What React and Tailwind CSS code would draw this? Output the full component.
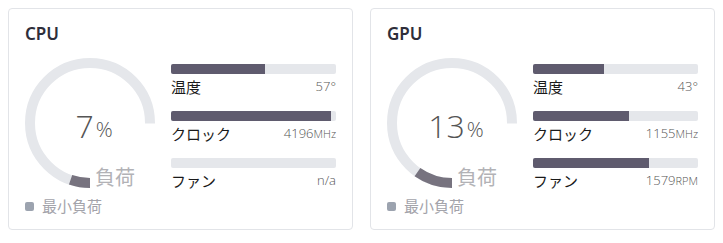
import React from 'react';

const FONT = { fontFamily: '"Noto Sans", "Noto Sans CJK JP", sans-serif' };
const LIGHT = { fontFamily: '"Open Sans", "Noto Sans", sans-serif' };

const R = 60;
const C = 2 * Math.PI * R;

function Gauge({ value }) {
  const track = C * 0.75;
  const fill = (track * value) / 100;
  return (
    <div className="relative h-[130px] w-[130px]">
      <svg width="130" height="130" viewBox="0 0 130 130" className="rotate-90">
        <circle cx="65" cy="65" r={R} fill="none" stroke="#e5e7eb" strokeWidth="10" strokeDasharray={`${track} ${C}`} />
        <circle cx="65" cy="65" r={R} fill="none" stroke="#77737f" strokeWidth="10" strokeDasharray={`${fill} ${C}`} />
      </svg>
      <div className="absolute inset-0 flex items-center justify-center pl-[8px] pt-[6px] text-[#555]" style={LIGHT}>
        <span className="text-[32px] leading-none font-light">{value}</span>
        <span className="ml-[2px] mt-[6px] text-[21px] leading-none font-light">%</span>
      </div>
      <span className="absolute left-[70px] top-[108px] text-[20px] leading-[24px] text-[#b2b2b6]">負荷</span>
    </div>
  );
}

function Stat({ label, pct, value, unit }) {
  return (
    <div>
      <div className="h-[10px] w-full overflow-hidden rounded-[2px] bg-[#e5e7eb]">
        <div className="h-full bg-[#5f5b6e]" style={{ width: `${pct}%` }} />
      </div>
      <div className="mt-[3px] flex h-[20px] items-center justify-between">
        <span className="text-[15px] text-[#1a1a1a]">{label}</span>
        <span className="text-[13px] font-light text-[#555]" style={LIGHT}>
          {value}
          {unit && <span className="text-[11px]">{unit}</span>}
        </span>
      </div>
    </div>
  );
}

function Card({ title, load, stats }) {
  return (
    <div className="h-[222px] w-[345px] rounded-[4px] border border-[#e2e4e8] bg-white px-4 pt-[13px]">
      <h2 className="text-[17px] leading-[24px] font-semibold text-[#2e2e3a]">{title}</h2>
      <div className="mt-[12px] flex">
        <div className="w-[146px]">
          <Gauge value={load} />
          <div className="mt-[9px] flex items-center gap-[8px]">
            <span className="h-[9px] w-[9px] shrink-0 rounded-[2px] bg-[#9ca3af]" />
            <span className="text-[15px] leading-[18px] text-[#a3a3aa]">最小負荷</span>
          </div>
        </div>
        <div className="mt-[6px] flex flex-1 flex-col gap-[14px]">
          {stats.map((s) => (
            <Stat key={s.label} {...s} />
          ))}
        </div>
      </div>
    </div>
  );
}

export default function App() {
  return (
    <div className="flex h-[243px] w-[723px] gap-[17px] bg-white pl-[8px] pt-[8px]" style={FONT}>
      <Card
        title="CPU"
        load={7}
        stats={[
          { label: '温度', pct: 57, value: '57°' },
          { label: 'クロック', pct: 97, value: '4196', unit: 'MHz' },
          { label: 'ファン', pct: 0, value: 'n/a' },
        ]}
      />
      <Card
        title="GPU"
        load={13}
        stats={[
          { label: '温度', pct: 43, value: '43°' },
          { label: 'クロック', pct: 58, value: '1155', unit: 'MHz' },
          { label: 'ファン', pct: 70, value: '1579', unit: 'RPM' },
        ]}
      />
    </div>
  );
}
